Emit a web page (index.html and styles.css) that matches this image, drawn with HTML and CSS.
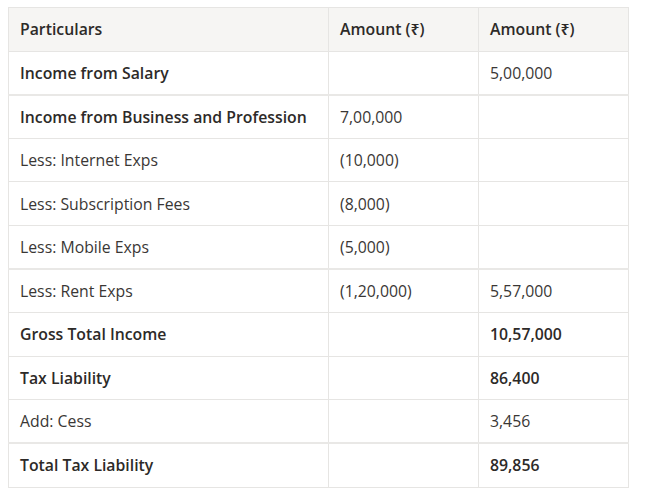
FILE: index.html
```html
<!DOCTYPE html>
<html lang="en">
<head>
    <meta charset="UTF-8">
    <meta name="viewport" content="width=device-width, initial-scale=1.0">
    <title>Tax Computation</title>
    <link rel="stylesheet" href="styles.css">
</head>
<body>

    <table class="tax-table">
        <colgroup>
            <col class="col-part">
            <col class="col-amt">
            <col class="col-amt">
        </colgroup>
        <thead>
            <tr>
                <th>Particulars</th>
                <th>Amount (₹)</th>
                <th>Amount (₹)</th>
            </tr>
        </thead>
        <tbody>
            <tr class="strong">
                <td>Income from Salary</td>
                <td></td>
                <td>5,00,000</td>
            </tr>
            <tr class="strong split">
                <td>Income from Business and Profession</td>
                <td>7,00,000</td>
                <td></td>
            </tr>
            <tr>
                <td>Less: Internet Exps</td>
                <td>(10,000)</td>
                <td></td>
            </tr>
            <tr>
                <td>Less: Subscription Fees</td>
                <td>(8,000)</td>
                <td></td>
            </tr>
            <tr>
                <td>Less: Mobile Exps</td>
                <td>(5,000)</td>
                <td></td>
            </tr>
            <tr class="split">
                <td>Less: Rent Exps</td>
                <td>(1,20,000)</td>
                <td>5,57,000</td>
            </tr>
            <tr class="strong">
                <td>Gross Total Income</td>
                <td></td>
                <td class="total">10,57,000</td>
            </tr>
            <tr class="strong">
                <td>Tax Liability</td>
                <td></td>
                <td class="total">86,400</td>
            </tr>
            <tr>
                <td>Add: Cess</td>
                <td></td>
                <td>3,456</td>
            </tr>
            <tr class="strong split">
                <td>Total Tax Liability</td>
                <td></td>
                <td class="total">89,856</td>
            </tr>
        </tbody>
    </table>

</body>
</html>
```

FILE: styles.css
```css
body {
    margin: 0;
    padding: 7px 8px;
    background: #fff;
    font-family: "Open Sans", "Noto Sans", sans-serif;
    font-size: 15.8px;
    color: #2d2a28;
}
.tax-table {
    width: 621px;
    border-collapse: collapse;
    table-layout: fixed;
}
.col-part {
    width: 320px;
}
.col-amt {
    width: 150px;
}
th,
td {
    box-sizing: border-box;
    border: 1px solid #e6e5e3;
    padding: 0 11px;
    height: 43.6px;
    text-align: left;
    vertical-align: middle;
    line-height: 22px;
}
th {
    background: #f6f5f3;
    font-weight: 600;
}
td {
    font-weight: 400;
    color: #3a3735;
}
.strong td:first-child {
    font-weight: 600;
    color: #2d2a28;
}
td.total {
    font-weight: 600;
    color: #2d2a28;
}
.split td {
    border-top: 2px solid #e9e8e6;
}
```
